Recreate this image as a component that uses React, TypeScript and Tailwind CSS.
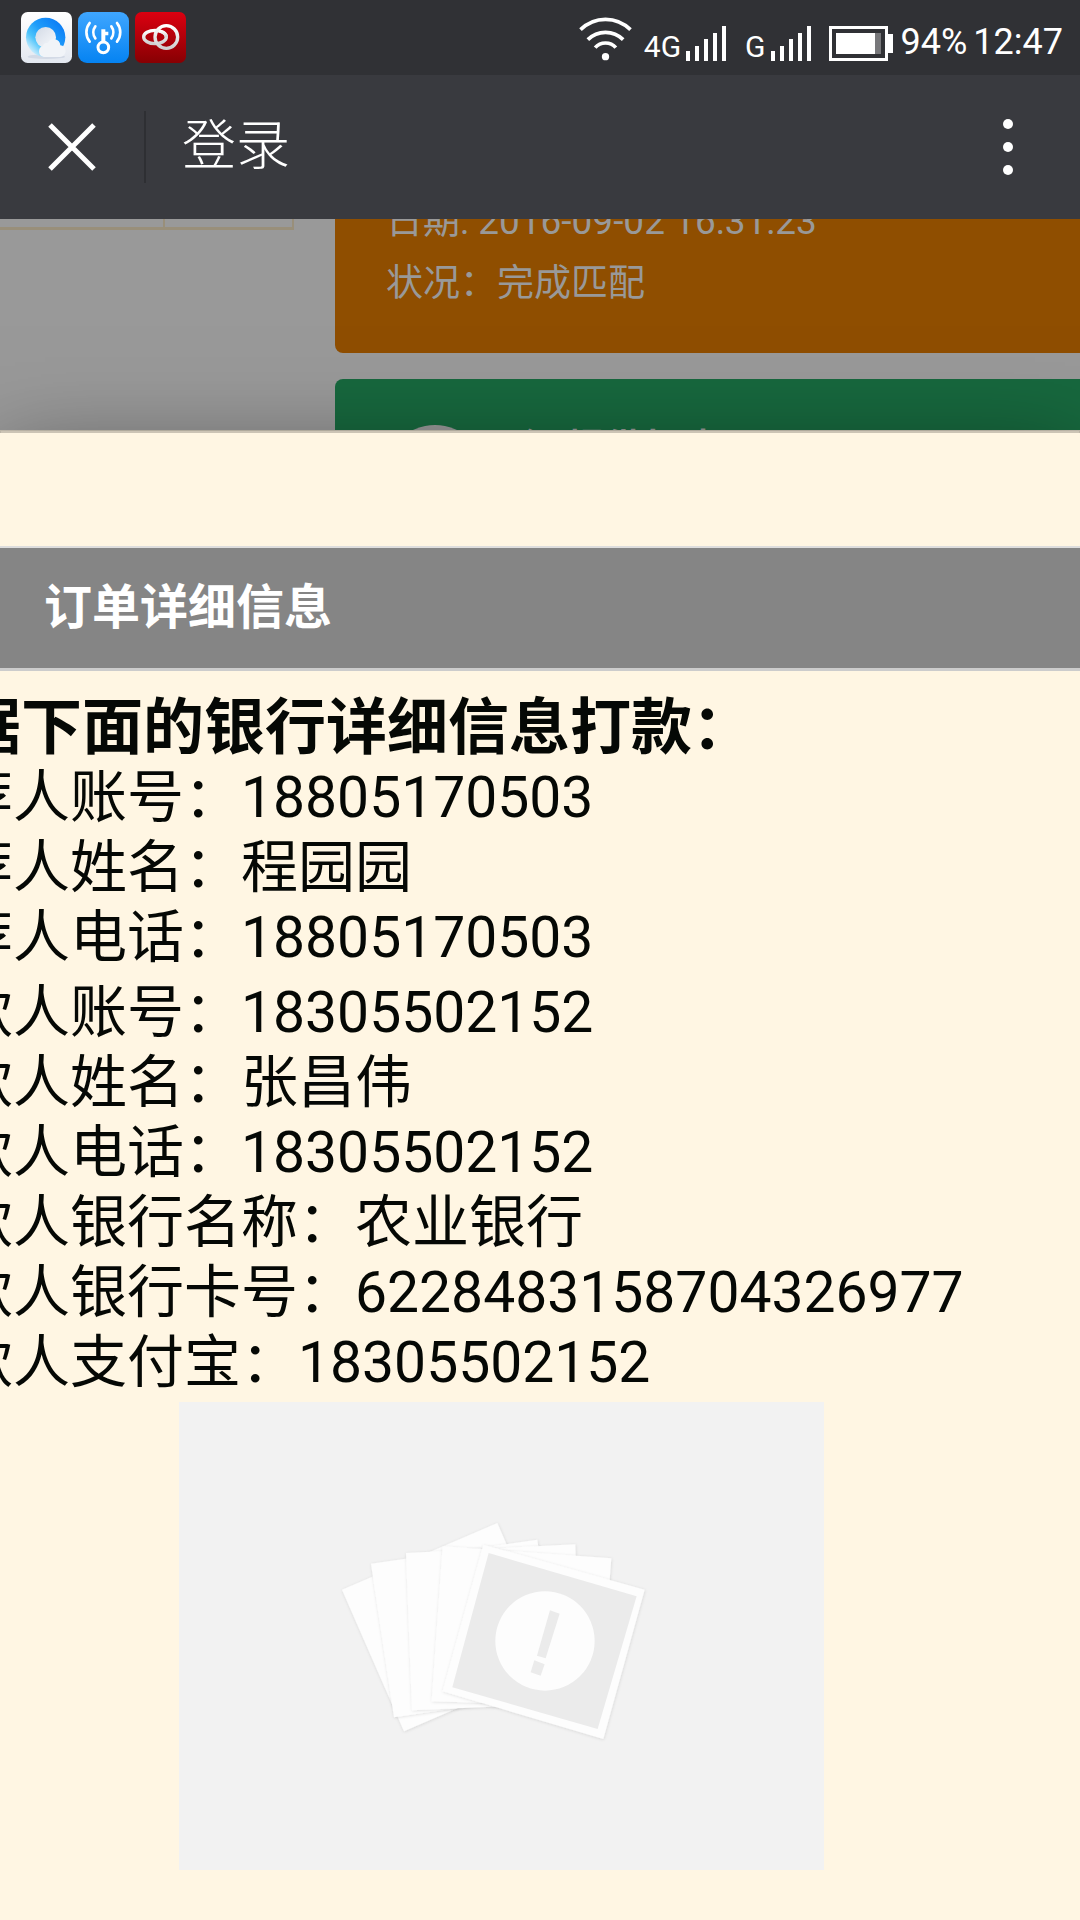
import React from 'react';

const FONT = 'font-[Roboto,"Noto_Sans_CJK_SC",sans-serif]';

function BrowserIcon() {
  return (
    <svg viewBox="0 0 153 153" className="size-[51px]" aria-label="浏览器">
      <defs>
        <linearGradient id="qbBg" x1="0" y1="0" x2="0" y2="1">
          <stop offset="0" stopColor="#ffffff" />
          <stop offset="1" stopColor="#e3e8f0" />
        </linearGradient>
        <linearGradient id="qbRing" x1="1" y1="0.2" x2="0.2" y2="1">
          <stop offset="0" stopColor="#0a7af5" />
          <stop offset="0.45" stopColor="#1f9dfa" />
          <stop offset="0.7" stopColor="#4bc3fb" />
          <stop offset="1" stopColor="#e4f5fd" />
        </linearGradient>
        <linearGradient id="qbHole" x1="0" y1="0" x2="1" y2="1">
          <stop offset="0" stopColor="#d3dae6" />
          <stop offset="1" stopColor="#f8fafc" />
        </linearGradient>
      </defs>
      <rect width="153" height="153" rx="20" fill="url(#qbBg)" />
      <ellipse cx="76" cy="134" rx="56" ry="7" fill="#d3dae6" />
      <circle cx="74" cy="76" r="59" fill="url(#qbRing)" />
      <circle cx="74" cy="76" r="31" fill="url(#qbHole)" />
      <path d="M68 135a17 17 0 0 1-2-33 12 12 0 0 1 14-9 20 20 0 0 1 38 7 18 18 0 0 1 16 18 17 17 0 0 1-17 17z" fill="#f1f4f8" />
    </svg>
  );
}

function WifiKeyIcon() {
  return (
    <svg viewBox="0 0 153 153" className="size-[51px]" aria-label="万能钥匙">
      <defs>
        <linearGradient id="keyBg" x1="0" y1="0" x2="0" y2="1">
          <stop offset="0" stopColor="#3fa6ff" />
          <stop offset="1" stopColor="#0583f2" />
        </linearGradient>
      </defs>
      <rect width="153" height="153" rx="27" fill="url(#keyBg)" />
      <g fill="none" stroke="#fff" strokeWidth="8" strokeLinecap="round">
        <path d="M35 33a45 45 0 0 0 0 56M52 43a30 30 0 0 0 0 36M117 33a45 45 0 0 1 0 56M100 43a30 30 0 0 1 0 36" />
      </g>
      <path d="M70 52h12v7h9v11h-9v18H70z" fill="#fff" />
      <circle cx="76" cy="106" r="16" fill="none" stroke="#fff" strokeWidth="9" />
    </svg>
  );
}

function RingsIcon() {
  return (
    <svg viewBox="0 0 153 153" className="size-[51px]" aria-label="圆环">
      <defs>
        <linearGradient id="ringBg" x1="0" y1="0" x2="0" y2="1">
          <stop offset="0" stopColor="#dc0010" />
          <stop offset="1" stopColor="#870003" />
        </linearGradient>
        <linearGradient id="ringStroke" x1="0" y1="0" x2="0" y2="1">
          <stop offset="0" stopColor="#ffffff" />
          <stop offset="1" stopColor="#cfcfcf" />
        </linearGradient>
      </defs>
      <rect width="153" height="153" rx="20" fill="url(#ringBg)" />
      <g fill="none" stroke="url(#ringStroke)" strokeWidth="10">
        <ellipse cx="60" cy="75" rx="34" ry="20" />
        <circle cx="94" cy="75" r="34" />
        <path d="M72 57c12 3 22 9 22 19" />
      </g>
    </svg>
  );
}

function WifiIcon() {
  return (
    <svg viewBox="0 0 158 132" className="h-[44px] w-[53px]" aria-label="Wi-Fi">
      <g fill="none" stroke="#fff" strokeWidth="11">
        <path d="M4 38Q36 7 79 7t75 31" />
        <path d="M26 68q22-22 53-22t53 22" />
        <path d="M48 92q12-14 31-14t31 14" />
      </g>
      <circle cx="79" cy="119" r="11" fill="#fff" />
    </svg>
  );
}

function SignalBars() {
  return (
    <svg viewBox="0 0 40 35" className="h-[35px] w-[40px]" fill="#fff" aria-label="信号">
      <path d="M0 25h4v10H0zM9 20h4v15H9zM18 13h4v22h-4zM27 7h4v28h-4zM36 0h4v35h-4z" />
    </svg>
  );
}

function BatteryIcon() {
  return (
    <svg viewBox="0 0 64 35" className="h-[35px] w-[64px]" aria-label="电池">
      <path d="M0 0h59v8h5v19h-5v8H0zM3 3v29h53V3z" fill="#fff" fillRule="evenodd" />
      <path d="M7 7h39v21H7z" fill="#fff" />
      <path d="M46 7h6v21h-6z" fill="#77777a" />
    </svg>
  );
}

function StatusBar() {
  return (
    <div className="flex h-[75px] items-start justify-between bg-[#303135] pl-[21px] pr-[17px] text-white">
      <div className="flex gap-[6px] pt-3">
        <BrowserIcon />
        <WifiKeyIcon />
        <RingsIcon />
      </div>
      <div className="flex h-[61px] items-end">
        <WifiIcon />
        <span className="ml-3 text-[30px] leading-[28px]">4G</span>
        <span className="ml-[5px]"><SignalBars /></span>
        <span className="ml-[19px] text-[30px] leading-[28px]">G</span>
        <span className="ml-[5px]"><SignalBars /></span>
        <span className="ml-[18px]"><BatteryIcon /></span>
        <span className="ml-2 text-[36px] leading-[38px]">94%</span>
        <span className="ml-[6px] text-[36px] leading-[38px]">12:47</span>
      </div>
    </div>
  );
}

function TitleBar() {
  return (
    <header className="flex h-[144px] items-center bg-[#393a3f] text-white">
      <button type="button" aria-label="关闭" className="flex h-full w-[144px] items-center justify-center">
        <svg viewBox="0 0 48 48" className="size-[48px]" stroke="#fff" strokeWidth="5">
          <path d="M2 2l44 44M46 2L2 46" />
        </svg>
      </button>
      <span className="h-[72px] w-[2px] bg-[#2e2f33]" />
      <h1 className="ml-[36px] flex-1 text-[54px] font-light leading-[72px]">登录</h1>
      <button type="button" aria-label="更多" className="flex h-full w-[144px] items-center justify-center">
        <svg viewBox="0 0 10 56" className="h-[56px] w-[10px]" fill="#fff">
          <circle cx="5" cy="5" r="5" />
          <circle cx="5" cy="28" r="5" />
          <circle cx="5" cy="51" r="5" />
        </svg>
      </button>
    </header>
  );
}

function DimmedPage() {
  return (
    <section className="flex h-[211px] items-start overflow-hidden bg-[#999999]">
      <table className="w-[294px] border-collapse">
        <tbody>
          <tr>
            <td className="h-[9px] w-[164px] border-b-3 border-r-2 border-[#998f7a] p-0" />
            <td className="h-[9px] border-b-3 border-r-2 border-[#998f7a] p-0" />
          </tr>
        </tbody>
      </table>
      <div className="ml-[41px] flex flex-1 flex-col gap-[26px] text-[#999999]">
        <article className="-mt-[28px] h-[162px] rounded-bl-lg bg-[#8f4e00] pl-[51px] text-[37px] leading-[62px]">
          <p>日期: 2016-09-02 16:31:23</p>
          <p>状况：完成匹配</p>
        </article>
        <article className="flex h-[160px] gap-[25px] rounded-tl-lg bg-[#17683e] pl-[49px] pt-[46px]">
          <span className="size-[102px] rounded-full bg-[#999999]" />
          <h2 className="text-[37px] font-bold leading-[48px]">会: 提供帮助</h2>
        </article>
      </div>
    </section>
  );
}

function EmptyPhoto() {
  return (
    <svg viewBox="0 0 645 468" className="block w-[645px] bg-[#f2f2f2]" role="img" aria-label="暂无图片">
      <defs>
        <filter id="cardShadow" x="-10%" y="-10%" width="120%" height="120%">
          <feDropShadow dx="1" dy="2" stdDeviation="4" floodColor="#000" floodOpacity="0.12" />
        </filter>
      </defs>
      <g transform="translate(121 71) scale(0.3333)" fill="#fdfdfd">
        <path filter="url(#cardShadow)" d="M126 350L592 150L775 575L312 775z" />
        <path filter="url(#cardShadow)" d="M213 272L712 200L780 660L282 733z" />
        <path filter="url(#cardShadow)" d="M318 240L826 214L840 690L336 712z" />
        <path filter="url(#cardShadow)" d="M428 220L934 256L900 700L395 685z" />
        <path filter="url(#cardShadow)" d="M550 215L1034 350L910 798L428 655z" />
        <path d="M566 240L1010 370L893 768L457 643z" fill="#ebebeb" />
        <circle cx="735" cy="504" r="149" />
        <path d="M750 412L779 422L737 556L711 548zM703 562L734 574L722 608L692 598z" fill="#ebebeb" />
      </g>
    </svg>
  );
}

const referrer = [
  ['推荐人账号', '18805170503'],
  ['推荐人姓名', '程园园'],
  ['推荐人电话', '18805170503'],
];

const payee = [
  ['收款人账号', '18305502152'],
  ['收款人姓名', '张昌伟'],
  ['收款人电话', '18305502152'],
  ['收款人银行名称', '农业银行'],
  ['收款人银行卡号', '6228483158704326977'],
  ['收款人支付宝', '18305502152'],
];

function Details({ rows }: { rows: string[][] }) {
  return (
    <div>
      {rows.map(([label, value]) => (
        <p key={label}>
          {label}：{value}
        </p>
      ))}
    </div>
  );
}

function OrderDialog() {
  return (
    <div
      role="dialog"
      aria-labelledby="order-title"
      className="relative flex-1 border-t-3 border-[#00000033] bg-[#fff6e3] bg-clip-padding pt-[113px] shadow-[0_30px_90px_rgba(0,0,0,0.5)]"
    >
      <div className="border-b-3 border-t-2 border-b-[#cccccc] border-t-[#dddddd] bg-[#858585] py-[29px] pl-[44px]">
        <h2 id="order-title" className="text-[48px] font-bold leading-[62px] text-white">订单详细信息</h2>
      </div>
      <div className="-ml-[101px] whitespace-nowrap pt-[22px] text-[57px] leading-[70px] text-[#050805]">
        <h3 className="text-[61px] font-bold">根据下面的银行详细信息打款：</h3>
        <div className="flex flex-col gap-[5px]">
          <Details rows={referrer} />
          <Details rows={payee} />
        </div>
        <div className="mt-1 pl-[280px]">
          <EmptyPhoto />
        </div>
      </div>
    </div>
  );
}

export default function App() {
  return (
    <div className={`flex min-h-screen flex-col overflow-hidden bg-[#fff6e3] ${FONT}`}>
      <StatusBar />
      <TitleBar />
      <DimmedPage />
      <OrderDialog />
    </div>
  );
}
